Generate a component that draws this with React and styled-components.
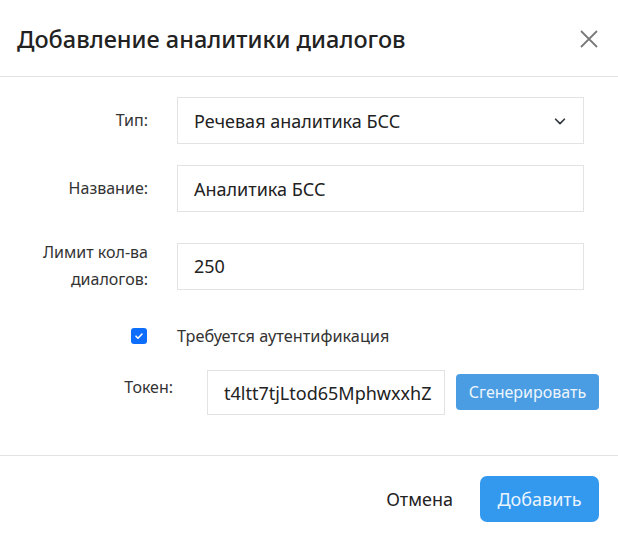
import React from "react";
import styled, { createGlobalStyle } from "styled-components";

const GlobalStyle = createGlobalStyle`
  html, body {
    margin: 0;
    padding: 0;
    background: #fff;
  }
  body {
    font-family: "Noto Sans", "Open Sans", sans-serif;
    color: #212529;
  }
  * {
    box-sizing: border-box;
  }
`;

const Modal = styled.div`
  width: 618px;
  height: 541px;
  display: flex;
  flex-direction: column;
  background: #fff;
`;

const Header = styled.div`
  height: 77px;
  padding: 2px 18px 0 17px;
  display: flex;
  align-items: center;
  justify-content: space-between;
  border-bottom: 1px solid #e2e2e2;
`;

const Title = styled.h4`
  margin: 0;
  font-size: 23.5px;
  font-weight: 500;
  color: #222;
`;

const CloseButton = styled.button`
  border: none;
  background: none;
  padding: 0;
  width: 22px;
  height: 22px;
  display: flex;
  align-items: center;
  justify-content: center;
  cursor: pointer;
`;

const Body = styled.div`
  flex: 1;
  padding: 20px 34px 0 17px;
  border-bottom: 1px solid #e2e2e2;
`;

const Row = styled.div`
  display: grid;
  grid-template-columns: 131px 1fr;
  column-gap: 29px;
  align-items: center;
  margin-top: ${({ gap }) => gap || 0}px;
`;

const Label = styled.label`
  flex-shrink: 0;
  text-align: right;
  font-size: 16px;
  line-height: 27px;
  color: #333;
`;

const Field = styled.div`
  height: 47px;
  border: 1px solid #e3e3e3;
  padding: 0 16px;
  display: flex;
  align-items: center;
  justify-content: space-between;
  font-size: 18px;
  color: #222;
`;

const CheckRow = styled.div`
  display: flex;
  align-items: center;
  margin-top: 32px;
  padding-left: 114px;
  gap: 30px;
  font-size: 16.3px;
  color: #333;
`;

const CheckBox = styled.span`
  width: 16px;
  height: 16px;
  border-radius: 3px;
  background: #0d6efd;
  display: flex;
  align-items: center;
  justify-content: center;
`;

const TokenRow = styled.div`
  display: flex;
  align-items: flex-start;
  margin-top: 23px;
`;

const TokenLabel = styled(Label)`
  width: 156px;
  padding-top: 4px;
`;

const TokenInput = styled.div`
  flex-shrink: 0;
  margin-left: 34px;
  width: 238px;
  height: 45px;
  border: 1px solid #e3e3e3;
  padding: 0 16px;
  display: flex;
  align-items: center;
  font-size: 18px;
  color: #222;
  overflow: hidden;
  white-space: nowrap;
`;

const SmallButton = styled.button`
  flex-shrink: 0;
  margin-left: 11px;
  margin-top: 4px;
  width: 143px;
  height: 36px;
  border: none;
  border-radius: 4px;
  background: #4a9de2;
  color: #eef5fc;
  font-family: inherit;
  font-size: 16px;
  padding: 0;
`;

const Footer = styled.div`
  height: 85px;
  padding: 0 19px 0 0;
  display: flex;
  align-items: center;
  justify-content: flex-end;
  gap: 27px;
`;

const TextButton = styled.button`
  border: none;
  background: none;
  padding: 0;
  font-family: inherit;
  font-size: 18px;
  color: #222;
`;

const PrimaryButton = styled.button`
  width: 119px;
  height: 46px;
  border: none;
  border-radius: 7px;
  background: #3299ef;
  color: #eaf4fd;
  font-family: inherit;
  font-size: 18px;
  padding: 0;
`;

function Chevron() {
  return (
    <svg width="14" height="14" viewBox="0 0 16 16" fill="none">
      <path d="M3 6l5 5 5-5" stroke="#343a40" strokeWidth="2" strokeLinecap="round" strokeLinejoin="round" />
    </svg>
  );
}

function AddAnalyticsDialog() {
  return (
    <Modal>
      <Header>
        <Title>Добавление аналитики диалогов</Title>
        <CloseButton aria-label="Закрыть">
          <svg width="20" height="20" viewBox="0 0 20 20">
            <path d="M2 2l16 16M18 2L2 18" stroke="#7a7a7a" strokeWidth="1.8" />
          </svg>
        </CloseButton>
      </Header>
      <Body>
        <Row>
          <Label>Тип:</Label>
          <Field>
            Речевая аналитика БСС
            <Chevron />
          </Field>
        </Row>
        <Row gap={21}>
          <Label>Название:</Label>
          <Field>Аналитика БСС</Field>
        </Row>
        <Row gap={27}>
          <Label>
            Лимит кол-ва
            <br />
            диалогов:
          </Label>
          <Field>250</Field>
        </Row>
        <CheckRow>
          <CheckBox>
            <svg width="10" height="10" viewBox="0 0 10 10">
              <path d="M2 5.2l2 2 4-4.2" stroke="#fff" strokeWidth="1.6" fill="none" strokeLinecap="round" strokeLinejoin="round" />
            </svg>
          </CheckBox>
          Требуется аутентификация
        </CheckRow>
        <TokenRow>
          <TokenLabel>Токен:</TokenLabel>
          <TokenInput>t4ltt7tjLtod65MphwxxhZ</TokenInput>
          <SmallButton>Сгенерировать</SmallButton>
        </TokenRow>
      </Body>
      <Footer>
        <TextButton>Отмена</TextButton>
        <PrimaryButton>Добавить</PrimaryButton>
      </Footer>
    </Modal>
  );
}

export default function App() {
  return (
    <>
      <GlobalStyle />
      <AddAnalyticsDialog />
    </>
  );
}
